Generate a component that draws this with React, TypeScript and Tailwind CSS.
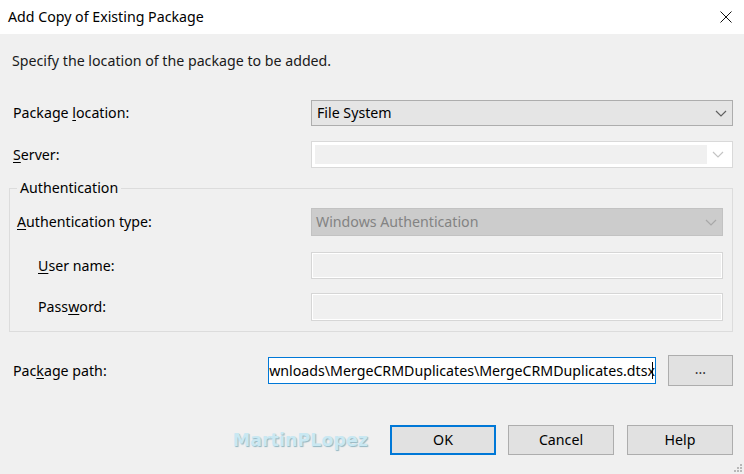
import React from "react";

const font = "font-['Noto_Sans',sans-serif]";

function Chevron({ color }: { color: string }) {
  return (
    <svg width="12" height="7" viewBox="0 0 12 7">
      <polyline points="1,1 6,6 11,1" fill="none" stroke={color} strokeWidth="1.2" />
    </svg>
  );
}

function Label({ children, className = "" }: { children: React.ReactNode; className?: string }) {
  return <div className={`shrink-0 text-[14.2px] leading-5 text-black ${className}`}>{children}</div>;
}

export default function App() {
  return (
    <div className={`w-[744px] h-[474px] overflow-hidden bg-[#f0f0f0] ${font}`}>
      {/* title bar */}
      <div className="h-[34px] bg-white flex items-center justify-between pl-2 pr-[12px]">
        <span className="text-[14.2px] text-black">Add Copy of Existing Package</span>
        <svg width="12" height="12" viewBox="0 0 12 12">
          <path d="M0.5 0.5 L11.5 11.5 M11.5 0.5 L0.5 11.5" stroke="#111" strokeWidth="1" />
        </svg>
      </div>

      <div className="relative h-[440px] pr-[11px]">
        <p className="pl-[12px] pt-[17px] text-[14.2px] leading-5 text-[#1a1a1a]">
          Specify the location of the package to be added.
        </p>

        {/* package location */}
        <div className="mt-[29px] pl-[13px] flex items-center">
          <Label className="w-[298px]">
            Package <u className="underline-offset-2">l</u>ocation:
          </Label>
          <div className="flex-1 h-[26px] bg-[#e5e5e5] border border-[#adadad] flex items-center justify-between pl-[5px] pr-[5px]">
            <span className="text-[14.2px] leading-5 text-black">File System</span>
            <Chevron color="#606060" />
          </div>
        </div>

        {/* server */}
        <div className="mt-[15px] pl-[13px] flex items-center">
          <Label className="w-[298px]">
            <u className="underline-offset-2">S</u>erver:
          </Label>
          <div className="flex-1 h-[27px] bg-white border border-[#d9d9d9] flex items-center p-[3px]">
            <div className="flex-1 h-full bg-[#f0f0f0]" />
            <div className="w-[22px] flex justify-center">
              <Chevron color="#c4c4c4" />
            </div>
          </div>
        </div>

        {/* authentication group */}
        <fieldset className="mt-[10px] ml-[9px] border border-[#dcdcdc] pl-[7px] pr-[9px] pb-[10px]">
          <legend className="px-[3px] text-[14.2px] leading-5 text-black">Authentication</legend>

          <div className="mt-[10px] flex items-center">
            <Label className="w-[294px]">
              <u className="underline-offset-2">A</u>uthentication type:
            </Label>
            <div className="flex-1 h-[28px] bg-[#cccccc] border border-[#c2c2c2] flex items-center justify-between pl-[4px] pr-[5px]">
              <span className="text-[14.2px] leading-5 text-[#838383]">Windows Authentication</span>
              <Chevron color="#a8a8a8" />
            </div>
          </div>

          <div className="mt-[16px] flex items-center">
            <Label className="w-[294px] pl-[21px]">
              <u className="underline-offset-2">U</u>ser name:
            </Label>
            <div className="flex-1 h-[27px] bg-[#f0f0f0] border border-[#d6d6d6] shadow-[inset_0_0_0_1px_#ffffff]" />
          </div>

          <div className="mt-[14px] flex items-center">
            <Label className="w-[294px] pl-[21px]">
              Pass<u className="underline-offset-2">w</u>ord:
            </Label>
            <div className="flex-1 h-[28px] bg-[#f0f0f0] border border-[#d6d6d6] shadow-[inset_0_0_0_1px_#ffffff]" />
          </div>
        </fieldset>

        {/* package path */}
        <div className="mt-[23px] pl-[13px] flex items-center">
          <Label className="w-[255px]">
            Pac<u className="underline-offset-2">k</u>age path:
          </Label>
          <div className="w-[388px] h-[27px] bg-white border border-[#0078d7] flex items-center justify-end overflow-hidden pr-[2px]">
            <span className="shrink-0 whitespace-nowrap text-[14.2px] leading-5 text-black">
              wnloads\MergeCRMDuplicates\MergeCRMDuplicates.dtsx
            </span>
            <span className="shrink-0 w-px h-[17px] bg-black -ml-[3px]" />
          </div>
          <button className="ml-[12px] flex-1 h-[31px] bg-[#e1e1e1] border border-[#adadad] text-[14px] leading-4 text-[#333] pb-[4px]">
            ...
          </button>
        </div>

        {/* buttons */}
        <div className="mt-[39px] flex items-center justify-end">
          <span className="mr-[22px] font-['DejaVu_Sans',sans-serif] font-bold text-[17.5px] leading-5 text-[#c9e8f2] [text-shadow:1px_1px_1px_#93b6c2]">
            MartinPLopez
          </span>
          <button className="w-[106px] h-[30px] bg-[#e1e1e1] border-2 border-[#0078d7] text-[14.2px] leading-5 text-black">
            OK
          </button>
          <button className="ml-[12px] w-[106px] h-[30px] bg-[#e1e1e1] border border-[#adadad] text-[14.2px] leading-5 text-black">
            Cancel
          </button>
          <button className="ml-[13px] w-[106px] h-[30px] bg-[#e1e1e1] border border-[#adadad] text-[14.2px] leading-5 text-black">
            Help
          </button>
        </div>

        {/* size grip */}
        <svg className="absolute right-[1px] bottom-[1px]" width="9" height="9" viewBox="0 0 9 9">
          <rect x="6" y="0" width="2" height="2" fill="#b8b8b8" />
          <rect x="3" y="3" width="2" height="2" fill="#b8b8b8" />
          <rect x="6" y="3" width="2" height="2" fill="#b8b8b8" />
          <rect x="0" y="6" width="2" height="2" fill="#b8b8b8" />
          <rect x="3" y="6" width="2" height="2" fill="#b8b8b8" />
          <rect x="6" y="6" width="2" height="2" fill="#b8b8b8" />
        </svg>
      </div>
    </div>
  );
}
